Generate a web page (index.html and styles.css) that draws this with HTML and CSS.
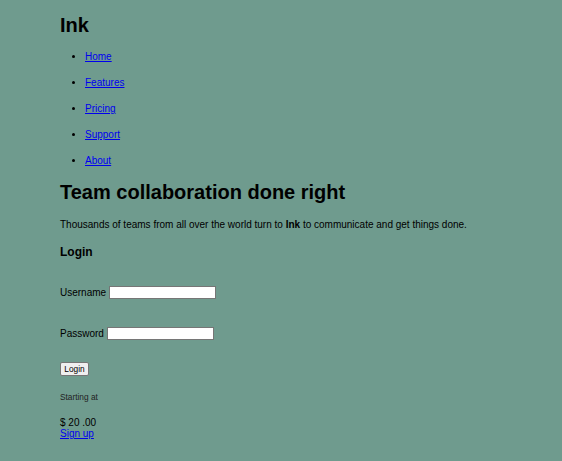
FILE: index.html
```html
<!DOCTYPE html>
<html>
<head>
<meta charset="utf-8">
<link rel="stylesheet" href="styles.css">
</head>
<body>
<div class="page">
  <header>
    <h1 class="logo">Ink</h1>
    <ul class="nav">
      <li><a href="#">Home</a></li>
      <li><a href="#">Features</a></li>
      <li><a href="#">Pricing</a></li>
      <li><a href="#">Support</a></li>
      <li><a href="#">About</a></li>
    </ul>
  </header>
  <h2 class="title">Team collaboration done right</h2>
  <p class="lead">Thousands of teams from all over the world turn to <b>Ink</b> to communicate and get things done.</p>
  <h3 class="login-title">Login</h3>
  <form class="login">
    <p class="field"><label>Username</label> <input type="text" class="input"></p>
    <p class="field field-pass"><label>Password</label> <input type="password" class="input"></p>
    <p class="actions"><button type="button" class="btn">Login</button></p>
  </form>
  <p class="starting">Starting at</p>
  <p class="price">$ 20 .00</p>
  <a class="signup" href="#">Sign up</a>
</div>
</body>
</html>
```
FILE: styles.css
```css
html, body {
  margin: 0;
  padding: 0;
  background: #6f9b8e;
}
body {
  font-family: "Liberation Sans", Arial, sans-serif;
  font-size: 10px;
  line-height: 12px;
  color: #000;
}
.page {
  padding-left: 60px;
}
a {
  color: #0000ee;
}
.logo {
  font-size: 20px;
  line-height: 23px;
  margin: 14px 0 0;
}
.nav {
  margin: 7px 0 0;
  padding-left: 25px;
}
.nav li {
  padding: 7px 0;
  line-height: 12px;
}
.title {
  font-size: 20px;
  line-height: 23px;
  margin: 7px 0 0;
}
.lead {
  margin: 15px 0 0;
}
.login-title {
  font-size: 12px;
  font-weight: bold;
  line-height: 14px;
  margin: 14px 0 0;
}
.login {
  margin: 0;
}
.field {
  margin: 27px 0 0;
  height: 13px;
  line-height: 13px;
  display: flex;
  align-items: center;
  gap: 3px;
}
.field-pass {
  margin-top: 28px;
}
.input {
  width: 107px;
  height: 13px;
  box-sizing: border-box;
  border: 1px solid #767676;
  background: #fff;
  padding: 0 2px;
  margin: 0;
  font-size: 8px;
  border-radius: 0;
}
.actions {
  margin: 22px 0 0;
  height: 14px;
}
.btn {
  font-family: "Liberation Sans", Arial, sans-serif;
  font-size: 8.3px;
  width: 29px;
  height: 14px;
  padding: 0;
  margin: 0;
  border: 1px solid #767676;
  border-radius: 2px;
  background: #efefef;
  color: #000;
  line-height: 12px;
}
.starting {
  font-size: 8.3px;
  line-height: 10px;
  color: #222;
  margin: 16px 0 0;
}
.price {
  margin: 15px 0 0;
  line-height: 11px;
}
.signup {
  display: block;
  line-height: 11px;
}
```
